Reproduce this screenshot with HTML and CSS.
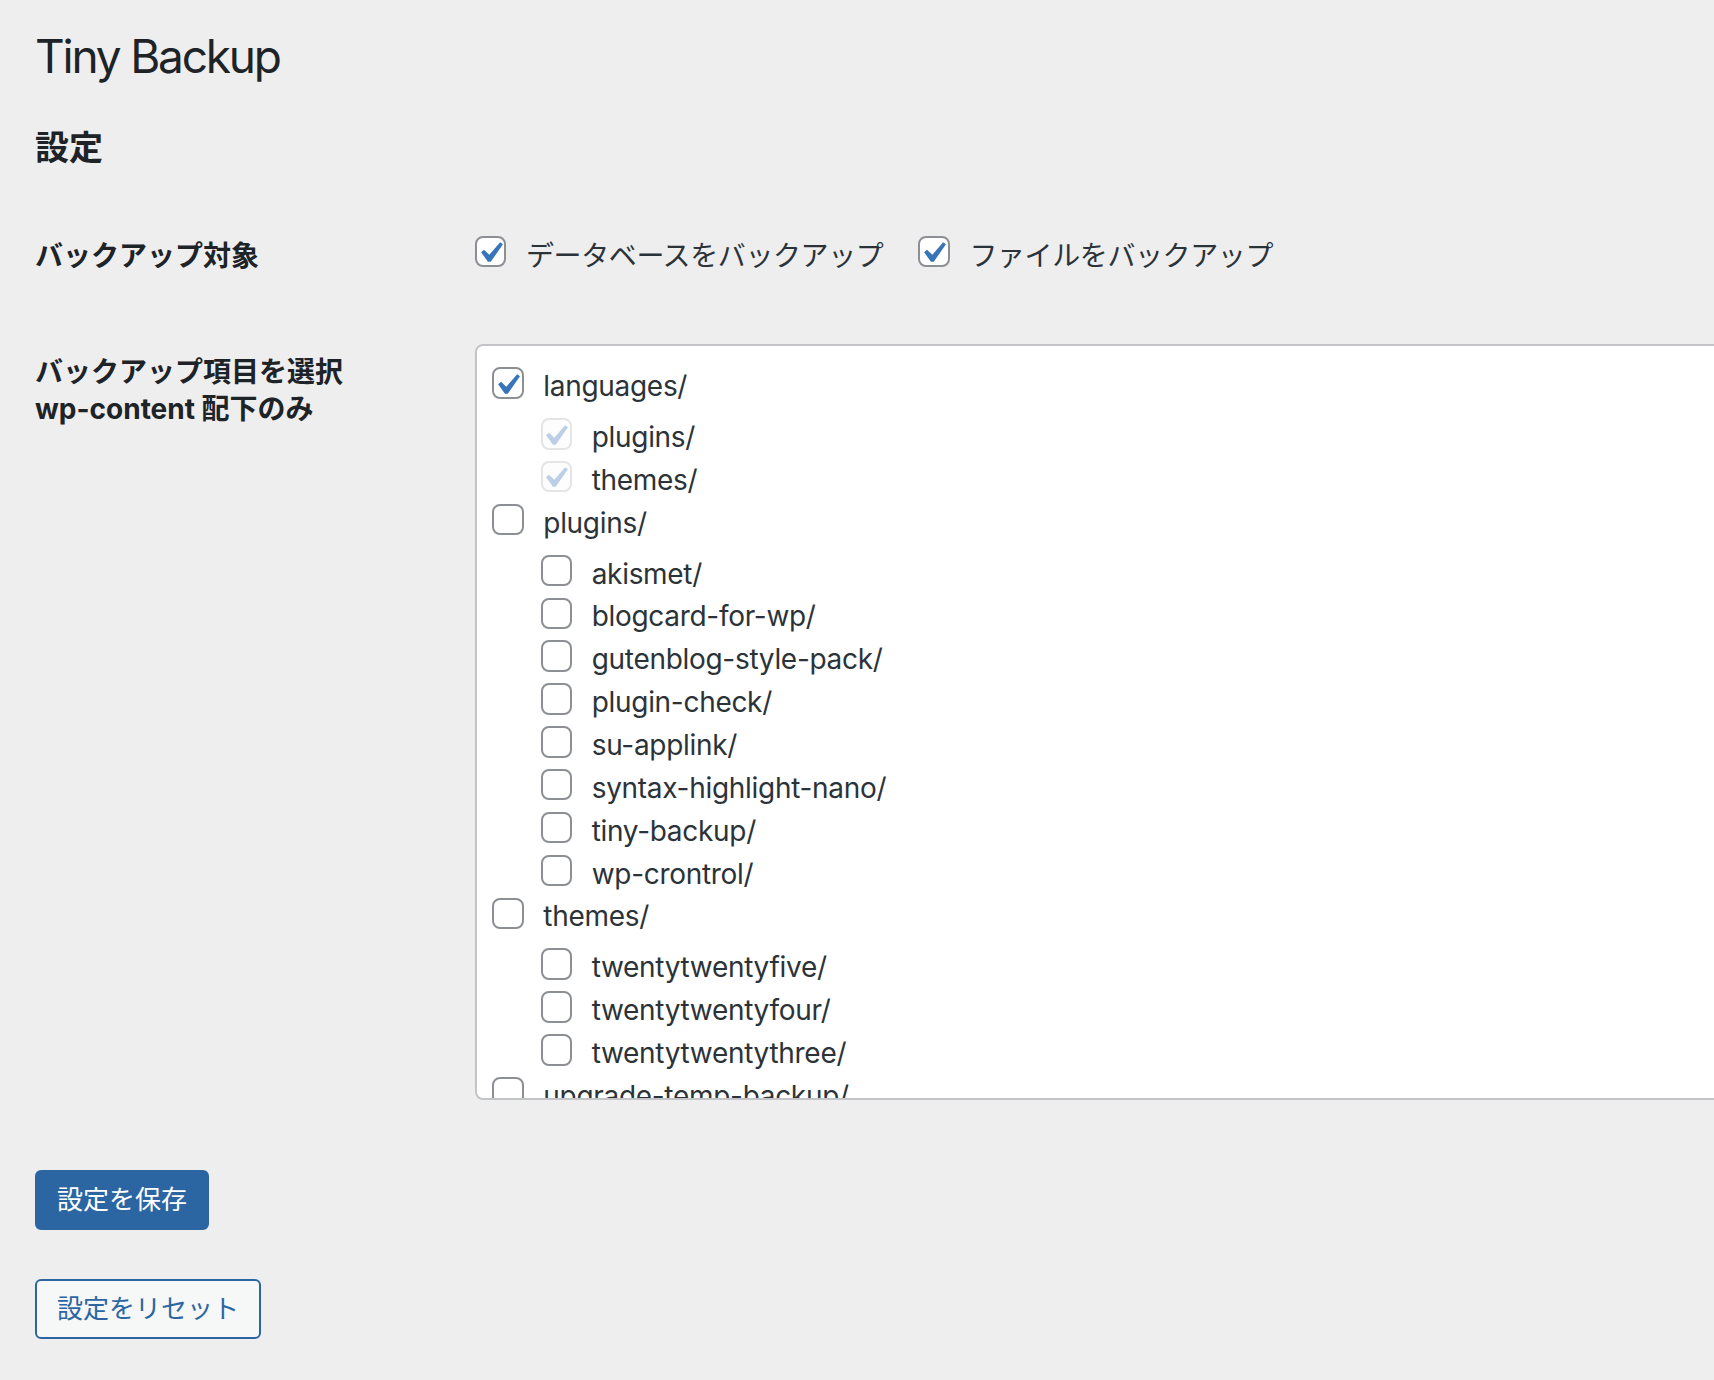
FILE: index.html
```html
<!DOCTYPE html>
<html lang="ja">
<head>
<meta charset="utf-8">
<title>Tiny Backup</title>
<link rel="stylesheet" href="styles.css">
</head>
<body>
<div class="wrap">
  <h1 class="page-title">Tiny Backup</h1>
  <h2 class="section-title">設定</h2>

  <div class="form-table">
    <div class="form-row row-targets">
      <div class="th">バックアップ対象</div>
      <div class="td td-targets">
        <label class="opt opt-db">
          <span class="cb"><svg viewBox="0 0 20 20"><path class="tick" d="M14.83 4.89l1.34.94-5.81 8.38H9.02L5.78 9.67l1.34-1.25 2.57 2.4z"/></svg></span>
          <span class="opt-text">データベースをバックアップ</span>
        </label>
        <label class="opt">
          <span class="cb"><svg viewBox="0 0 20 20"><path class="tick" d="M14.83 4.89l1.34.94-5.81 8.38H9.02L5.78 9.67l1.34-1.25 2.57 2.4z"/></svg></span>
          <span class="opt-text">ファイルをバックアップ</span>
        </label>
      </div>
    </div>

    <div class="form-row row-items">
      <div class="th">バックアップ項目を選択<br>wp-content 配下のみ</div>
      <div class="td td-items">
        <div class="tree-box">
          <ul class="tree">
            <li>
              <label class="item"><span class="cb"><svg viewBox="0 0 20 20"><path class="tick" d="M14.83 4.89l1.34.94-5.81 8.38H9.02L5.78 9.67l1.34-1.25 2.57 2.4z"/></svg></span><span class="item-text">languages/</span></label>
              <ul class="sub">
                <li><label class="item"><span class="cb disabled"><svg viewBox="0 0 20 20"><path class="tick" d="M14.83 4.89l1.34.94-5.81 8.38H9.02L5.78 9.67l1.34-1.25 2.57 2.4z"/></svg></span><span class="item-text">plugins/</span></label></li>
                <li><label class="item"><span class="cb disabled"><svg viewBox="0 0 20 20"><path class="tick" d="M14.83 4.89l1.34.94-5.81 8.38H9.02L5.78 9.67l1.34-1.25 2.57 2.4z"/></svg></span><span class="item-text">themes/</span></label></li>
              </ul>
            </li>
            <li>
              <label class="item"><span class="cb"></span><span class="item-text">plugins/</span></label>
              <ul class="sub">
                <li><label class="item"><span class="cb"></span><span class="item-text">akismet/</span></label></li>
                <li><label class="item"><span class="cb"></span><span class="item-text">blogcard-for-wp/</span></label></li>
                <li><label class="item"><span class="cb"></span><span class="item-text">gutenblog-style-pack/</span></label></li>
                <li><label class="item"><span class="cb"></span><span class="item-text">plugin-check/</span></label></li>
                <li><label class="item"><span class="cb"></span><span class="item-text">su-applink/</span></label></li>
                <li><label class="item"><span class="cb"></span><span class="item-text">syntax-highlight-nano/</span></label></li>
                <li><label class="item"><span class="cb"></span><span class="item-text">tiny-backup/</span></label></li>
                <li><label class="item"><span class="cb"></span><span class="item-text">wp-crontrol/</span></label></li>
              </ul>
            </li>
            <li>
              <label class="item"><span class="cb"></span><span class="item-text">themes/</span></label>
              <ul class="sub">
                <li><label class="item"><span class="cb"></span><span class="item-text">twentytwentyfive/</span></label></li>
                <li><label class="item"><span class="cb"></span><span class="item-text">twentytwentyfour/</span></label></li>
                <li><label class="item"><span class="cb"></span><span class="item-text">twentytwentythree/</span></label></li>
              </ul>
            </li>
            <li>
              <label class="item"><span class="cb"></span><span class="item-text">upgrade-temp-backup/</span></label>
            </li>
          </ul>
        </div>
      </div>
    </div>
  </div>

  <div class="actions">
    <button type="button" class="button button-primary">設定を保存</button>
  </div>
  <div class="actions actions-reset">
    <button type="button" class="button button-secondary">設定をリセット</button>
  </div>
</div>
</body>
</html>
```

FILE: styles.css
```css
html, body {
  margin: 0;
  padding: 0;
}

body {
  background: #eeeeef;
  color: #1d2327;
  font-family: Inter, "Noto Sans CJK JP", sans-serif;
  overflow: hidden;
}

.wrap {
  padding: 26px 0 0 35px;
}

.page-title {
  margin: 0;
  font-size: 46px;
  font-weight: 400;
  line-height: 60px;
  letter-spacing: -2.2px;
  color: #1d2327;
}

.section-title {
  margin: 40px 0 0;
  font-size: 34px;
  font-weight: 700;
  line-height: 44px;
  color: #1d2327;
}

.form-table {
  margin-top: 28px;
}

.form-row {
  display: flex;
  align-items: flex-start;
}

.th {
  flex: none;
  width: 440px;
  box-sizing: border-box;
  padding: 40px 20px 40px 0;
  font-size: 28px;
  font-weight: 700;
  line-height: 36.4px;
  color: #1d2327;
}

.td {
  flex: none;
}

.td-targets {
  display: flex;
  padding-top: 38px;
}

.opt {
  display: flex;
  align-items: flex-start;
}

.opt-db {
  margin-right: 35px;
}

.opt-text {
  margin-top: 1.6px;
  font-size: 28px;
  line-height: 36.4px;
  letter-spacing: -0.4px;
  color: #2c3338;
}

.cb {
  position: relative;
  flex: none;
  box-sizing: border-box;
  width: 31.4px;
  height: 31.4px;
  margin-right: 19.6px;
  border: 2px solid #8c8f94;
  border-radius: 8px;
  background: #fff;
}

.cb svg {
  position: absolute;
  left: -8.4px;
  top: -5.6px;
  width: 42px;
  height: 42px;
}

.tick {
  fill: #3874b9;
}

.cb.disabled {
  border-color: #e4e5e7;
  background: #fdfdfd;
}

.cb.disabled .tick {
  fill: #bccfe7;
}

.td-items {
  padding-top: 30px;
  padding-bottom: 30px;
}

.tree-box {
  box-sizing: border-box;
  width: 1300px;
  height: 756px;
  padding: 18.7px 0 0 15.3px;
  border: 2px solid #c3c4c7;
  border-radius: 8px;
  background: #fff;
  overflow: hidden;
}

.tree,
.sub {
  list-style: none;
  margin: 0;
  padding: 0;
}

.sub {
  margin-top: 8px;
  padding-left: 48.4px;
}

.item {
  display: flex;
  align-items: flex-start;
  height: 42.86px;
}

.item .cb {
  margin-top: 2.2px;
}

.item-text {
  font-size: 28px;
  line-height: 42.86px;
  letter-spacing: -0.3px;
  color: #2c3338;
  white-space: nowrap;
}

.actions {
  margin-top: 39.6px;
}

.actions-reset {
  margin-top: 49px;
}

.button {
  box-sizing: border-box;
  height: 60px;
  margin: 0;
  padding: 0 20px;
  border: 2px solid #2b66a3;
  border-radius: 6px;
  font-family: Inter, "Noto Sans CJK JP", sans-serif;
  font-size: 26px;
  line-height: 56px;
  cursor: pointer;
}

.button-primary {
  background: #2b66a3;
  color: #fff;
}

.button-secondary {
  background: #f6f7f7;
  color: #2b66a3;
}
```
